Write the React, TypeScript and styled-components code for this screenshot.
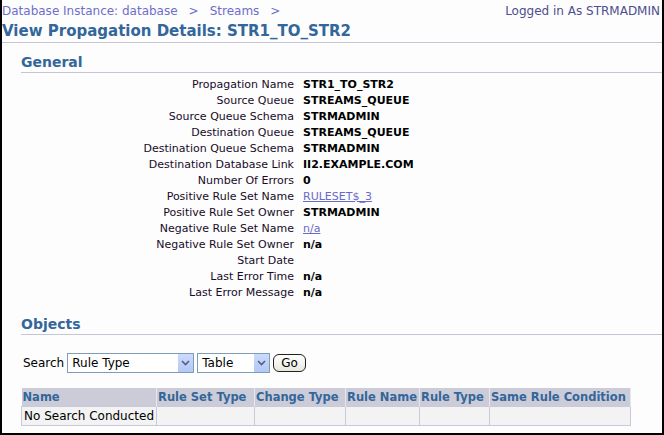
import React from "react";
import styled, { createGlobalStyle } from "styled-components";

const Global = createGlobalStyle`
  html, body { margin: 0; padding: 0; background: #fcfdfc; }
  body { font-family: Tahoma, "DejaVu Sans", Verdana, sans-serif; font-size: 11px; color: #000; }
`;

const Frame = styled.div`
  width: 664px;
  height: 435px;
  box-sizing: border-box;
  border-left: 2px solid #000;
  border-right: 2px solid #000;
  border-bottom: 2px solid #000;
  overflow: hidden;
  background: #fcfdfc;
`;

const TopBar = styled.div`
  display: flex;
  justify-content: space-between;
  align-items: center;
  height: 22px;
  padding: 0 2px 0 0;
`;

const Crumbs = styled.div`
  display: flex;
  gap: 11px;
  color: #6e6ecc;
  font-size: 12px;
`;

const Logged = styled.div`
  color: #4e4e90;
  font-size: 12px;
`;

const Title = styled.h1`
  margin: 0;
  font-size: 15px;
  font-weight: bold;
  color: #33669a;
  height: 20px;
  line-height: 19px;
  border-bottom: 1px solid #c5c5d5;
`;

const Section = styled.div`
  margin-left: 19px;
`;

const SectionTitle = styled.h2<{ $top: number }>`
  margin: ${(p) => p.$top}px 0 0 0;
  font-size: 14px;
  font-weight: bold;
  color: #33669a;
  height: 19px;
  line-height: 19px;
  border-bottom: 1px solid #c5c5d5;
`;

const Grid = styled.div`
  display: grid;
  grid-template-columns: 273px auto;
  column-gap: 9px;
  margin-top: 3px;
  grid-auto-rows: 16px;
  align-items: center;
`;

const Label = styled.div`
  text-align: right;
  white-space: nowrap;
  color: #1a0a2a;
`;

const Value = styled.div`
  font-weight: bold;
  white-space: nowrap;
`;

const LinkVal = styled.a`
  color: #6a6ac8;
  text-decoration: underline;
  font-weight: normal;
`;

const SearchRow = styled.div`
  display: flex;
  align-items: center;
  gap: 3px;
  margin-top: 18px;
  margin-left: 2px;
`;

const SearchLabel = styled.span`
  font-size: 12px;
`;

const Select = styled.div<{ $w: number }>`
  width: ${(p) => p.$w}px;
  height: 20px;
  box-sizing: border-box;
  border: 1px solid #7f9db9;
  background: #fff;
  display: flex;
  align-items: center;
  justify-content: space-between;
  padding-left: 4px;
  font-size: 12px;
`;

const Arrow = styled.div`
  width: 15px;
  height: 18px;
  background: linear-gradient(#ccdafc, #b3c8f5);
  display: flex;
  align-items: center;
  justify-content: center;
`;

const Go = styled.div`
  height: 18px;
  box-sizing: border-box;
  padding: 0 7px;
  border: 1px solid #222;
  border-radius: 6px;
  background: linear-gradient(#fff, #e8e8e0);
  font-size: 12px;
  display: flex;
  align-items: center;
`;

const Table = styled.table`
  border-collapse: collapse;
  margin-top: 15px;
`;

const Th = styled.th<{ $w: number }>`
  width: ${(p) => p.$w}px;
  box-sizing: border-box;
  background: #ccccd9;
  color: #33669a;
  text-align: left;
  font-weight: bold;
  font-size: 11.5px;
  height: 18px;
  padding: 0 1px;
  border-right: 1px solid #e6e6ee;
  white-space: nowrap;
`;

const Td = styled.td`
  background: #f2f3f2;
  border: 1px solid #c9c9d9;
  height: 18px;
  padding: 0 2px;
  font-size: 12px;
  white-space: nowrap;
`;

const Chevron = () => (
  <svg width="9" height="6" viewBox="0 0 9 6">
    <path d="M1 1 L4.5 4.5 L8 1" stroke="#4d6185" strokeWidth="1.6" fill="none" />
  </svg>
);

const rows: [string, React.ReactNode][] = [
  ["Propagation Name", "STR1_TO_STR2"],
  ["Source Queue", "STREAMS_QUEUE"],
  ["Source Queue Schema", "STRMADMIN"],
  ["Destination Queue", "STREAMS_QUEUE"],
  ["Destination Queue Schema", "STRMADMIN"],
  ["Destination Database Link", "II2.EXAMPLE.COM"],
  ["Number Of Errors", "0"],
  ["Positive Rule Set Name", <LinkVal href="#">RULESET$_3</LinkVal>],
  ["Positive Rule Set Owner", "STRMADMIN"],
  ["Negative Rule Set Name", <LinkVal href="#">n/a</LinkVal>],
  ["Negative Rule Set Owner", "n/a"],
  ["Start Date", ""],
  ["Last Error Time", "n/a"],
  ["Last Error Message", "n/a"],
];

const cols: [string, number][] = [
  ["Name", 134],
  ["Rule Set Type", 98],
  ["Change Type", 91],
  ["Rule Name", 74],
  ["Rule Type", 70],
  ["Same Rule Condition", 141],
];

export default function App() {
  return (
    <>
      <Global />
      <Frame>
        <TopBar>
          <Crumbs>
            <span>Database Instance: database</span>
            <span>&gt;</span>
            <span>Streams</span>
            <span>&gt;</span>
          </Crumbs>
          <Logged>Logged in As STRMADMIN</Logged>
        </TopBar>
        <Title>View Propagation Details: STR1_TO_STR2</Title>
        <Section>
          <SectionTitle $top={10}>General</SectionTitle>
          <Grid>
            {rows.map(([l, v]) => (
              <React.Fragment key={l}>
                <Label>{l}</Label>
                <Value>{v}</Value>
              </React.Fragment>
            ))}
          </Grid>
          <SectionTitle $top={15}>Objects</SectionTitle>
          <SearchRow>
            <SearchLabel>Search</SearchLabel>
            <Select $w={127}>
              Rule Type
              <Arrow>
                <Chevron />
              </Arrow>
            </Select>
            <Select $w={73}>
              Table
              <Arrow>
                <Chevron />
              </Arrow>
            </Select>
            <Go>Go</Go>
          </SearchRow>
          <Table>
            <thead>
              <tr>
                {cols.map(([c, w]) => (
                  <Th key={c} $w={w}>
                    {c}
                  </Th>
                ))}
              </tr>
            </thead>
            <tbody>
              <tr>
                <Td>No Search Conducted</Td>
                <Td />
                <Td />
                <Td />
                <Td />
                <Td />
              </tr>
            </tbody>
          </Table>
        </Section>
      </Frame>
    </>
  );
}
